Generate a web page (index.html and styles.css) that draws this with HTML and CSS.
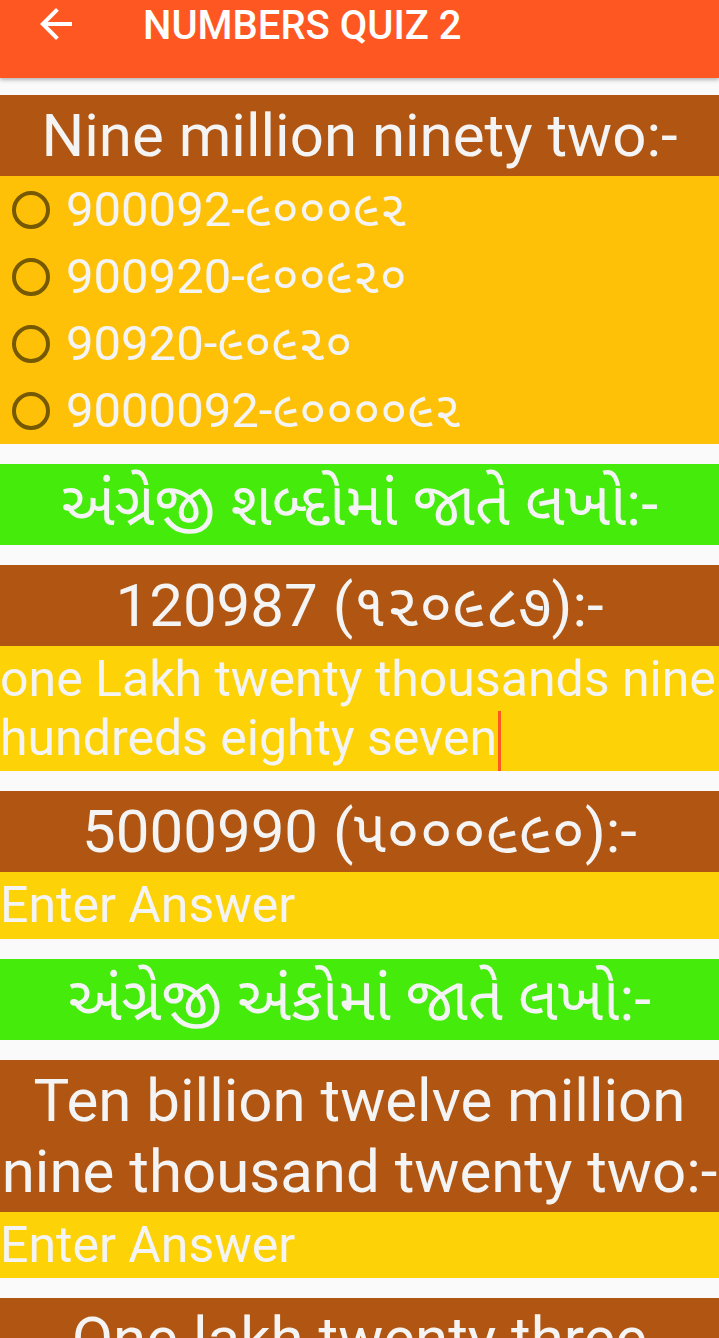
FILE: index.html
```html
<!DOCTYPE html>
<html lang="gu">
<head>
<meta charset="utf-8">
<title>NUMBERS QUIZ 2</title>
<link rel="stylesheet" href="styles.css">
</head>
<body>
<header class="appbar">
  <div class="appbar-row">
    <svg class="back" viewBox="0 0 24 24" width="48" height="48" aria-hidden="true"><path d="M20 11H7.83l5.59-5.59L12 4l-8 8 8 8 1.41-1.41L7.83 13H20v-2z" fill="#fff"/></svg>
    <h1 class="title">NUMBERS QUIZ 2</h1>
  </div>
</header>
<main class="quiz">
  <section class="question">
    <h2 class="q-head">Nine million ninety two:-</h2>
    <div class="options">
      <label class="option"><span class="radio"></span><span class="opt-text">900092-૯૦૦૦૯૨</span></label>
      <label class="option"><span class="radio"></span><span class="opt-text">900920-૯૦૦૯૨૦</span></label>
      <label class="option"><span class="radio"></span><span class="opt-text">90920-૯૦૯૨૦</span></label>
      <label class="option"><span class="radio"></span><span class="opt-text">9000092-૯૦૦૦૦૯૨</span></label>
    </div>
  </section>
  <h2 class="section-head">અંગ્રેજી શબ્દોમાં જાતે લખો:-</h2>
  <section class="question">
    <h2 class="q-head">120987 (૧૨૦૯૮૭):-</h2>
    <div class="answer">one Lakh twenty thousands nine hundreds eighty seven<span class="caret"></span></div>
  </section>
  <section class="question">
    <h2 class="q-head">5000990 (૫૦૦૦૯૯૦):-</h2>
    <div class="answer hint">Enter Answer</div>
  </section>
  <h2 class="section-head">અંગ્રેજી અંકોમાં જાતે લખો:-</h2>
  <section class="question">
    <h2 class="q-head">Ten billion twelve million nine thousand twenty two:-</h2>
    <div class="answer hint">Enter Answer</div>
  </section>
  <section class="question">
    <h2 class="q-head">One lakh twenty three thousand:-</h2>
    <div class="answer hint">Enter Answer</div>
  </section>
</main>
</body>
</html>
```

FILE: styles.css
```css
html, body {
  margin: 0;
  padding: 0;
}
body {
  background: #fafafa;
  font-family: Roboto, "Noto Sans Gujarati", "Lohit Gujarati", "Noto Sans", sans-serif;
  color: #f4f4f4;
}
.appbar {
  height: 78px;
  background: #ff5722;
  box-shadow: 0 2px 4px rgba(0,0,0,0.28);
  position: relative;
  z-index: 1;
}
.appbar-row {
  height: 48px;
  display: flex;
  align-items: center;
}
.back {
  margin-left: 32px;
  flex: none;
}
.title {
  margin: 0 0 0 63px;
  padding-top: 4px;
  font-size: 40px;
  font-weight: 500;
  line-height: 48px;
  color: #fff;
}
.quiz {
  display: flex;
  flex-direction: column;
  gap: 20px;
  padding-top: 17px;
}
.question {
  display: flex;
  flex-direction: column;
}
.q-head {
  margin: 0;
  background: #b05612;
  font-size: 60px;
  font-weight: 400;
  line-height: 71px;
  padding: 5px 0;
  text-align: center;
}
.section-head {
  margin: 0;
  background: #44eb0b;
  font-size: 61px;
  font-weight: 400;
  line-height: 71px;
  height: 71px;
  padding: 5px 0;
  text-align: center;
  white-space: nowrap;
  overflow: hidden;
}
.options {
  background: #ffc107;
  display: flex;
  flex-direction: column;
}
.option {
  height: 67px;
  display: flex;
  align-items: center;
  padding-left: 12px;
}
.radio {
  width: 30px;
  height: 30px;
  border: 4px solid #755903;
  border-radius: 50%;
  flex: none;
}
.opt-text {
  margin-left: 16px;
  font-size: 49px;
  line-height: 57px;
}
.answer {
  background: #fdd207;
  font-size: 50px;
  line-height: 58.5px;
  padding: 4px 0;
}
.caret {
  display: inline-block;
  width: 3px;
  height: 60px;
  margin: 2px 0 -4px 1px;
  background: #ff5722;
  vertical-align: top;
}
```
